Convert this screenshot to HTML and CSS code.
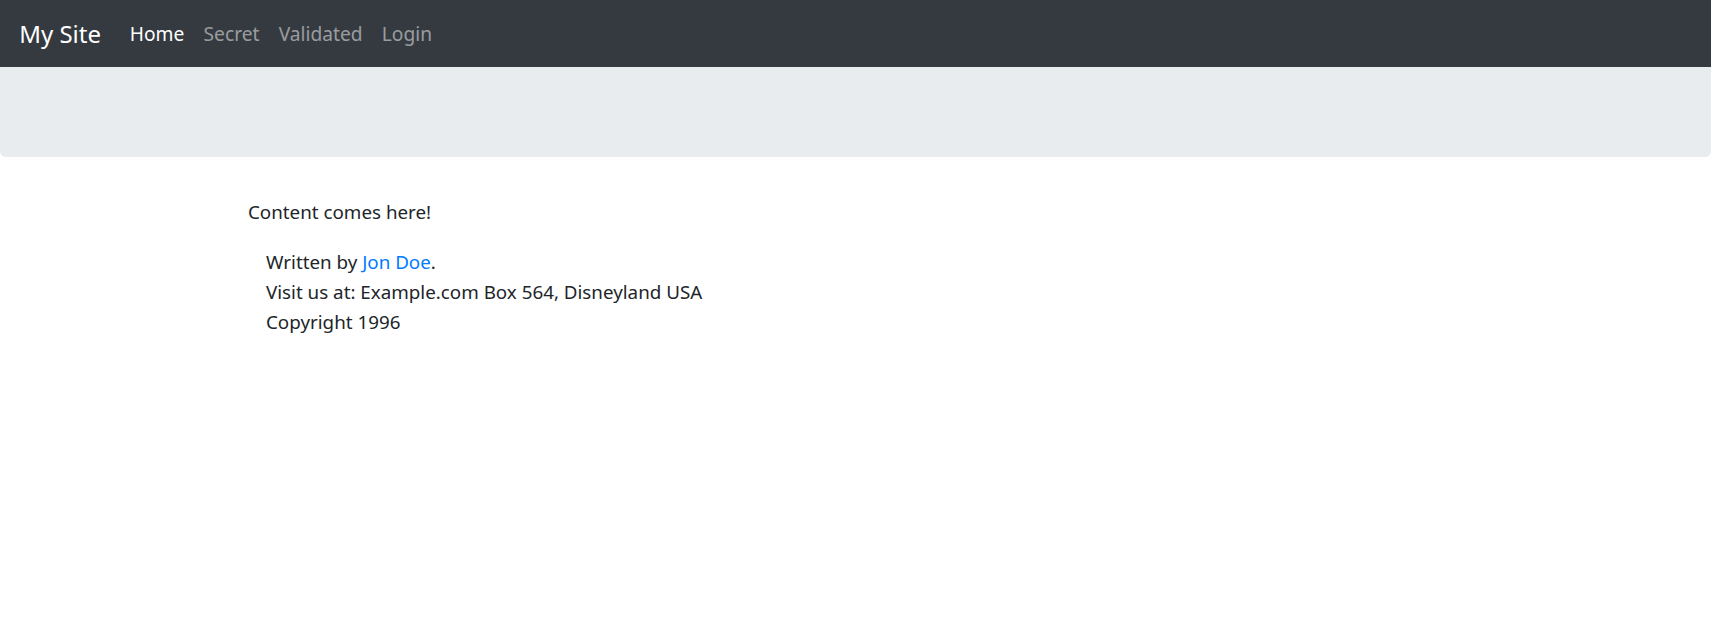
FILE: index.html
```html
<!DOCTYPE html>
<html lang="en">
<head>
<meta charset="utf-8">
<title>My Site</title>
<link rel="stylesheet" href="styles.css">
</head>
<body>
<nav class="navbar">
  <a class="brand" href="#">My Site</a>
  <ul class="nav">
    <li><a class="nav-link active" href="#">Home</a></li>
    <li><a class="nav-link" href="#">Secret</a></li>
    <li><a class="nav-link" href="#">Validated</a></li>
    <li><a class="nav-link" href="#">Login</a></li>
  </ul>
</nav>
<div class="jumbotron"></div>
<main class="container">
  <p class="content">Content comes here!</p>
  <footer class="footer">
    <div>Written by <a class="link" href="#">Jon Doe</a>.</div>
    <div>Visit us at: Example.com Box 564, Disneyland USA</div>
    <div>Copyright 1996</div>
  </footer>
</main>
</body>
</html>
```
FILE: styles.css
```css
* { box-sizing: border-box; }
html, body { margin: 0; padding: 0; }
body {
  font-family: "Noto Sans", "Open Sans", sans-serif;
  font-size: 18.8px;
  line-height: 30px;
  color: #212529;
  background: #fff;
}
a { text-decoration: none; }
.navbar {
  display: flex;
  align-items: center;
  height: 67px;
  padding: 0 19.2px;
  background: #343a40;
  font-size: 19.2px;
}
.brand {
  color: #fff;
  font-size: 24px;
  line-height: 36px;
  margin-right: 19.2px;
}
.nav {
  display: flex;
  list-style: none;
  margin: 0;
  padding: 0;
}
.nav-link {
  display: block;
  padding: 9.6px;
  color: rgba(255, 255, 255, 0.5);
}
.nav-link.active { color: #fff; }
.jumbotron {
  height: 90px;
  background: #e9ecef;
  border-radius: 0 0 5.76px 5.76px;
  margin-bottom: 40px;
}
.container {
  padding-left: 248px;
}
.content {
  margin: 0 0 20px;
}
.footer {
  padding-left: 18px;
}
.link { color: #007bff; }
```
